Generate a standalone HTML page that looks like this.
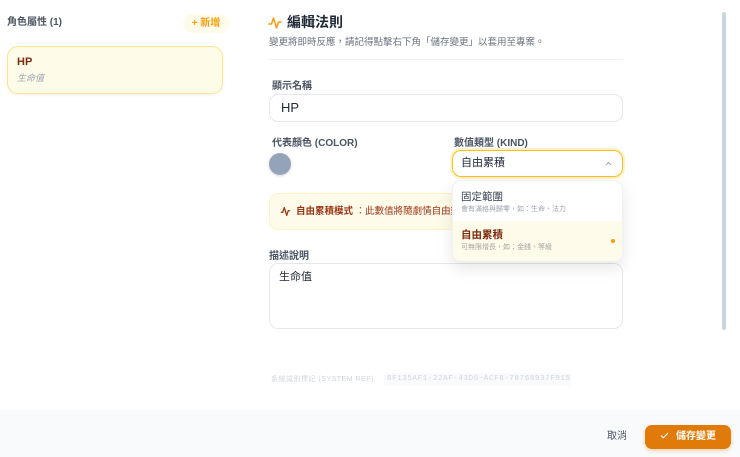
<!DOCTYPE html>
<html><head><meta charset="utf-8"><style>
*{box-sizing:border-box;margin:0;padding:0}
body{width:740px;height:457px;overflow:hidden;background:#fff;font-family:"Liberation Sans","Noto Sans CJK TC",sans-serif;position:relative;color:#1f2937;line-height:1.2}
.a{position:absolute}
.lbl{font-size:10px;color:#4b5563;font-weight:600}
</style></head><body>
<div class="a" style="left:7px;top:17px;font-size:10px;font-weight:700;color:#4b5563">角色屬性 (1)</div>
<div class="a" style="left:183px;top:14px;width:46px;height:19px;border-radius:9px;background:#fffbeb;color:#f59e0b;font-size:10px;font-weight:700;line-height:19px;text-align:center">+ 新增</div>
<div class="a" style="left:7px;top:46px;width:216px;height:48px;border:1px solid #fde68a;border-radius:11px;background:#fefce8;box-shadow:0 1px 3px rgba(0,0,0,.06)">
 <div class="a" style="left:9px;top:9px;font-size:11px;font-weight:700;color:#7c2d12">HP</div>
 <div class="a" style="left:9px;top:26px;font-size:9px;font-style:italic;color:#9ca3af">生命值</div>
</div>
<svg class="a" style="left:268px;top:16px" width="14" height="14" viewBox="0 0 14 14"><path d="M1 8h2.5l2-6 3 10 2-6H13" fill="none" stroke="#f59e0b" stroke-width="1.5" stroke-linejoin="round" stroke-linecap="round"/></svg>
<div class="a" style="left:287px;top:14px;font-size:14px;font-weight:700;color:#1f2937">編輯法則</div>
<div class="a" style="left:269px;top:37px;font-size:9.5px;color:#6b7280">變更將即時反應，請記得點擊右下角「儲存變更」以套用至專案。</div>
<div class="a" style="left:269px;top:59px;width:354px;height:1px;background:#f1f2f4"></div>
<div class="a lbl" style="left:272px;top:81px">顯示名稱</div>
<div class="a" style="left:269px;top:94px;width:354px;height:28px;border:1px solid #e5e7eb;border-radius:9px;font-size:13px;line-height:26px;padding-left:11px">HP</div>
<div class="a lbl" style="left:272px;top:138px">代表顏色 (COLOR)</div>
<div class="a" style="left:269px;top:153px;width:22px;height:22px;border-radius:50%;background:#94a3b8;box-shadow:0 1px 3px rgba(0,0,0,.15)"></div>
<div class="a lbl" style="left:454px;top:138px">數值類型 (KIND)</div>
<div class="a" style="left:452px;top:150px;width:171px;height:27px;border:1.5px solid #fbbf24;border-radius:9px;font-size:11px;line-height:24px;padding-left:8px;box-shadow:0 0 0 2px #fef3c7">自由累積
 <svg style="position:absolute;right:10px;top:10px" width="7" height="5" viewBox="0 0 7 5"><path d="M1 4l2.5-2.5L6 4" fill="none" stroke="#9ca3af" stroke-width="1"/></svg></div>
<div class="a" style="left:269px;top:193px;width:200px;height:37px;border:1px solid #fef3c7;border-right:none;border-radius:9px 0 0 9px;background:#fffbeb"></div>
<svg class="a" style="left:280px;top:206px" width="11" height="11" viewBox="0 0 14 14"><path d="M1 8h2.5l2-6 3 10 2-6H13" fill="none" stroke="#9a3412" stroke-width="1.6" stroke-linejoin="round"/></svg>
<div class="a" style="left:296px;top:206px;font-size:9.5px;color:#9a3412;font-weight:700;white-space:nowrap">自由累積模式 <span style="font-weight:400;color:#9a3412">：此數值將隨劇情自由變動</span></div>
<div class="a lbl" style="left:269px;top:251px">描述說明</div>
<div class="a" style="left:269px;top:263px;width:354px;height:66px;border:1px solid #e5e7eb;border-radius:9px;font-size:11px;padding:7px 9px">生命值</div>
<div class="a" style="left:452px;top:180px;width:171px;height:82px;background:#fff;border:1px solid #f1f1f1;border-radius:9px;box-shadow:0 6px 16px rgba(0,0,0,.1);overflow:hidden">
 <div class="a" style="left:8px;top:10px;font-size:10.5px;color:#374151">固定範圍</div>
 <div class="a" style="left:8px;top:25px;font-size:7px;color:#9ca3af">會有滿格與歸零，如：生命、法力</div>
 <div class="a" style="left:0;top:40px;width:171px;height:42px;background:#fffbeb">
  <div class="a" style="left:8px;top:8px;font-size:10.5px;font-weight:700;color:#7c2d12">自由累積</div>
  <div class="a" style="left:8px;top:23px;font-size:7px;color:#a8a29e">可無限增長，如：金錢、等級</div>
  <div class="a" style="left:158px;top:18px;width:4px;height:4px;border-radius:50%;background:#f59e0b"></div>
 </div>
</div>
<div class="a" style="left:722px;top:12px;width:4px;height:318px;border-radius:2px;background:#cbd5e1"></div>
<div class="a" style="left:271px;top:376px;font-size:7px;color:#d1d5db;letter-spacing:.5px">系統識別標記 (SYSTEM REF)</div>
<div class="a" style="left:384px;top:373px;width:187px;height:13px;background:#f9fafb;border-radius:3px;font-family:'Liberation Mono',monospace;font-size:7.5px;color:#d1d5db;line-height:13px;padding-left:3px;letter-spacing:.6px">8F135AF1-22AF-43D6-ACF8-78768937F915</div>
<div class="a" style="left:0;top:410px;width:740px;height:47px;background:#f9fafb"></div>
<div class="a" style="left:607px;top:431px;font-size:10px;color:#4b5563">取消</div>
<div class="a" style="left:645px;top:425px;width:86px;height:24px;border-radius:7px;background:#e07b0a;color:#fff;font-size:10px;font-weight:700;line-height:24px;text-align:center;box-shadow:0 2px 4px rgba(224,123,10,.3)"><svg width="9" height="7" viewBox="0 0 9 7" style="vertical-align:0;margin-right:7px"><path d="M1 3.5l2.3 2.3L8 1" fill="none" stroke="#fff" stroke-width="1.1"/></svg>儲存變更</div>
</body></html>
